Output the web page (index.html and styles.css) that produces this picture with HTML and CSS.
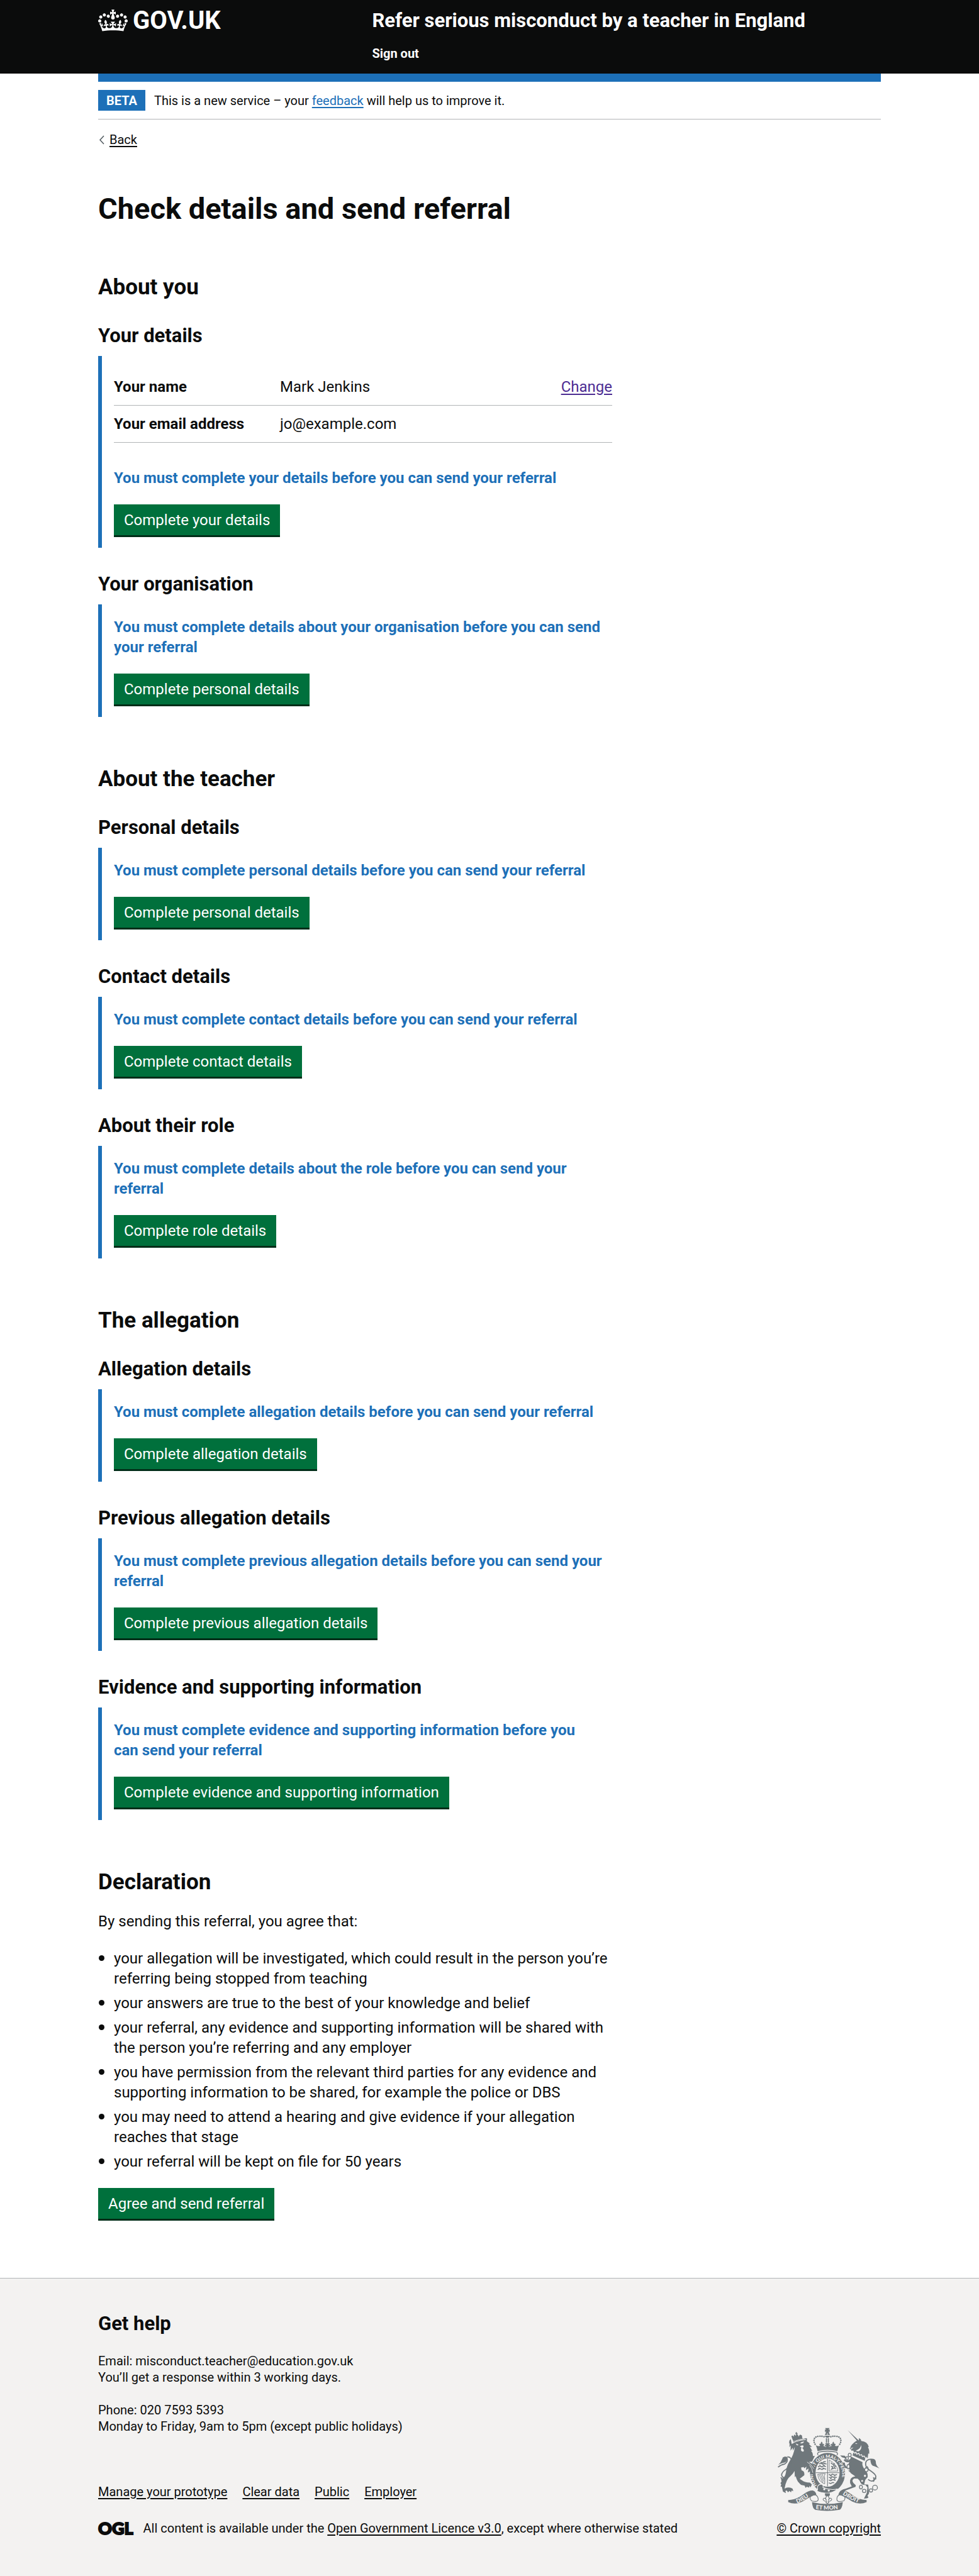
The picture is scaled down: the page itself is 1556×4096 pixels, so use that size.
FILE: index.html
```html
<!DOCTYPE html>
<html lang="en">
<head>
  <meta charset="utf-8">
  <meta name="viewport" content="width=device-width, initial-scale=1">
  <title>Check details and send referral</title>
  <link rel="stylesheet" href="styles.css">
</head>
<body>
  <header class="header">
    <div class="container header-inner">
      <a class="logo" href="#">
        <svg class="logo-crown" viewBox="0 0 132 97" aria-hidden="true"><path fill="currentColor" d="M25 30.2c3.5 1.5 7.7-.2 9.1-3.7 1.5-3.6-.2-7.8-3.9-9.2-3.6-1.4-7.6.3-9.1 3.9-1.4 3.5.3 7.5 3.9 9zM9 39.5c3.6 1.5 7.8-.2 9.2-3.7 1.5-3.6-.2-7.8-3.9-9.1-3.6-1.5-7.6.2-9.1 3.8-1.4 3.5.3 7.5 3.8 9zM4.4 57.2c3.5 1.5 7.7-.2 9.1-3.8 1.5-3.6-.2-7.7-3.9-9.1-3.5-1.5-7.6.3-9.1 3.8-1.4 3.5.3 7.6 3.9 9.1zm38.3-21.4c3.5 1.5 7.7-.2 9.1-3.8 1.5-3.6-.2-7.7-3.9-9.1-3.6-1.5-7.6.3-9.1 3.8-1.3 3.6.4 7.7 3.9 9.1zm64.4-5.6c-3.6 1.5-7.8-.2-9.1-3.7-1.5-3.6.2-7.8 3.8-9.2 3.6-1.4 7.7.3 9.2 3.9 1.3 3.5-.4 7.5-3.9 9zm15.9 9.3c-3.6 1.5-7.7-.2-9.1-3.7-1.5-3.6.2-7.8 3.7-9.1 3.6-1.5 7.7.2 9.2 3.8 1.5 3.5-.3 7.5-3.8 9zm4.7 17.7c-3.6 1.5-7.8-.2-9.2-3.8-1.5-3.6.2-7.7 3.9-9.1 3.6-1.5 7.7.3 9.2 3.8 1.3 3.5-.4 7.6-3.9 9.1zM89.3 35.8c-3.6 1.5-7.8-.2-9.2-3.8-1.4-3.6.2-7.7 3.9-9.1 3.6-1.5 7.7.3 9.2 3.8 1.4 3.6-.3 7.7-3.9 9.1zM69.7 17.7l8.9 4.7V9.3l-8.9 2.8c-.2-.3-.5-.6-.9-.9L72.4 0H59.6l3.5 11.2c-.3.3-.6.5-.9.9l-8.8-2.8v13.1l8.8-4.7c.3.3.6.7.9.9l-5 15.4v.1c-.2.8-.4 1.6-.4 2.4 0 4.1 3.1 7.5 7 8.1h.2c.3 0 .7.1 1 .1.4 0 .7 0 1-.1h.2c4-.6 7.1-4.1 7.1-8.1 0-.8-.1-1.7-.4-2.4V34l-5.1-15.4c.4-.2.7-.6 1-.9zM66 92.8c16.9 0 32.8 1.1 47.1 3.2 4-16.9 8.9-26.7 14-33.5l-9.6-3.4c1 4.9 1.1 7.2 0 10.2-1.5-1.4-3-4.3-4.2-8.7L108.6 76c2.8-2 5-3.2 7.5-3.3-4.4 9.4-10 11.9-13.6 11.2-4.3-.8-6.3-4.6-5.6-7.9 1-4.7 5.7-5.9 8-.5 4.3-8.7-3-11.4-7.6-8.8 7.1-7.2 7.9-13.5 2.1-21.1-8 6.1-8.1 12.3-4.5 20.8-4.7-5.4-12.1-2.5-9.5 6.2 3.4-5.2 7.9-2 7.2 3.1-.6 4.3-6.4 7.8-13.5 7.2-10.3-.9-10.9-8-11.2-13.8 2.5-.5 7.1 1.8 11 7.3L80.2 60c-4.1 4.4-8 5.3-12.3 5.4 1.4-4.4 8-11.6 8-11.6H55.5s6.4 7.2 7.9 11.6c-4.2-.1-8-1-12.3-5.4l1.4 16.4c3.9-5.5 8.5-7.7 10.9-7.3-.3 5.8-.9 12.8-11.1 13.8-7.2.6-12.9-2.9-13.5-7.2-.7-5 3.8-8.3 7.1-3.1 2.7-8.7-4.6-11.6-9.4-6.2 3.7-8.5 3.6-14.7-4.6-20.8-5.8 7.6-5 13.9 2.2 21.1-4.7-2.6-11.9.1-7.7 8.8 2.3-5.5 7.1-4.2 8.1.5.7 3.3-1.3 7.1-5.7 7.9-3.5.7-9-1.8-13.5-11.2 2.5.1 4.7 1.3 7.5 3.3l-4.7-15.4c-1.2 4.4-2.7 7.2-4.3 8.7-1.1-3-.9-5.3 0-10.2l-9.5 3.4c5 6.9 9.9 16.7 14 33.5 14.8-2.1 30.8-3.2 47.7-3.2z"/></svg>
        <span class="logo-text">GOV.UK</span>
      </a>
      <div class="header-content">
        <a class="service-name" href="#">Refer serious misconduct by a teacher in England</a>
        <nav><a class="sign-out" href="#">Sign out</a></nav>
      </div>
    </div>
  </header>

  <div class="container">
    <div class="phase-banner">
      <strong class="tag">BETA</strong>
      <span>This is a new service – your <a class="link" href="#">feedback</a> will help us to improve it.</span>
    </div>
    <a class="back-link" href="#"><svg class="back-arrow" viewBox="0 0 9 15" aria-hidden="true"><path d="M8 1 2 7.500 8 14" fill="none" stroke="#505a5f" stroke-width="1.500"/></svg><span>Back</span></a>

    <main class="main">
      <h1 class="heading-xl">Check details and send referral</h1>

      <section class="group">
        <h2 class="heading-l">About you</h2>
        <h3 class="heading-m">Your details</h3>
        <div class="inset">
          <dl class="summary">
            <div class="summary-row">
              <dt class="summary-key">Your name</dt>
              <dd class="summary-value">Mark Jenkins</dd>
              <dd class="summary-action"><a class="link-visited" href="#">Change</a></dd>
            </div>
            <div class="summary-row">
              <dt class="summary-key">Your email address</dt>
              <dd class="summary-value">jo@example.com</dd>
            </div>
          </dl>
          <p class="inset-message">You must complete your details before you can send your referral</p>
          <button class="button" type="button">Complete your details</button>
        </div>
        <h3 class="heading-m">Your organisation</h3>
        <div class="inset">
          <p class="inset-message">You must complete details about your organisation before you can send your referral</p>
          <button class="button" type="button">Complete personal details</button>
        </div>
      </section>

      <section class="group">
        <h2 class="heading-l">About the teacher</h2>
        <h3 class="heading-m">Personal details</h3>
        <div class="inset">
          <p class="inset-message">You must complete personal details before you can send your referral</p>
          <button class="button" type="button">Complete personal details</button>
        </div>
        <h3 class="heading-m">Contact details</h3>
        <div class="inset">
          <p class="inset-message">You must complete contact details before you can send your referral</p>
          <button class="button" type="button">Complete contact details</button>
        </div>
        <h3 class="heading-m">About their role</h3>
        <div class="inset">
          <p class="inset-message">You must complete details about the role before you can send your referral</p>
          <button class="button" type="button">Complete role details</button>
        </div>
      </section>

      <section class="group">
        <h2 class="heading-l">The allegation</h2>
        <h3 class="heading-m">Allegation details</h3>
        <div class="inset">
          <p class="inset-message">You must complete allegation details before you can send your referral</p>
          <button class="button" type="button">Complete allegation details</button>
        </div>
        <h3 class="heading-m">Previous allegation details</h3>
        <div class="inset">
          <p class="inset-message">You must complete previous allegation details before you can send your referral</p>
          <button class="button" type="button">Complete previous allegation details</button>
        </div>
        <h3 class="heading-m">Evidence and supporting information</h3>
        <div class="inset">
          <p class="inset-message">You must complete evidence and supporting information before you can&nbsp;send your referral</p>
          <button class="button" type="button">Complete evidence and supporting information</button>
        </div>
      </section>

      <section class="group">
        <h2 class="heading-l">Declaration</h2>
        <p class="declaration-intro">By sending this referral, you agree that:</p>
        <ul class="bullets">
          <li>your allegation will be investigated, which could result in the person you’re referring being stopped from teaching</li>
          <li>your answers are true to the best of your knowledge and belief</li>
          <li>your referral, any evidence and supporting information will be shared with the person you’re referring and any employer</li>
          <li>you have permission from the relevant third parties for any evidence and supporting information to be shared, for example the police or DBS</li>
          <li>you may need to attend a hearing and give evidence if your allegation reaches that stage</li>
          <li>your referral will be kept on file for 50 years</li>
        </ul>
        <button class="button" type="submit">Agree and send referral</button>
      </section>
    </main>
  </div>

  <footer class="footer">
    <div class="container">
      <h2 class="footer-heading">Get help</h2>
      <div class="footer-meta">
        <div class="footer-main">
          <p class="footer-text">Email: misconduct.teacher@education.gov.uk<br>You’ll get a response within 3 working days.</p>
          <p class="footer-text">Phone: 020 7593 5393<br>Monday to Friday, 9am to 5pm (except public holidays)</p>
          <ul class="footer-links">
            <li><a href="#">Manage your prototype</a></li>
            <li><a href="#">Clear data</a></li>
            <li><a href="#">Public</a></li>
            <li><a href="#">Employer</a></li>
          </ul>
          <div class="licence">
            <span class="ogl">OGL</span>
            <span>All content is available under the <a href="#">Open Government Licence v3.0</a>, except where otherwise stated</span>
          </div>
        </div>
        <a class="copyright" href="#">
          <svg class="crest" viewBox="130 93 754 617" aria-hidden="true">
            <defs>
              <path id="garter" d="M428 530A108 122 0 1 1 572 530"/>
              <path id="scroll-left" d="M274 652Q322 634 372 594"/>
              <path id="scroll-mid" d="M412 694Q498 706 586 693"/>
              <path id="scroll-right" d="M610 588Q664 622 724 648"/>
            </defs>
            <!-- royal crown -->
            <g fill="#6f777b">
              <path d="M481 96h33l-8 13 9-4v20l-9-4 7 12h-30l7-12-10 4v-20l9 4zM479 147q2-14 17-15v15zM500 132q15 1 17 15h-17zM479 152h38q-3 14-19 15-16-1-19-15z"/>
              <path d="M487 170h8v36h-8zM501 170h8v36h-8zM481 208h36l-10 14 12-4v14l-12-3 8 12h-32l8-12-11 3v-14l11 4z"/>
              <path d="M412 222q26 14 32 2-12-8 0-13 7 0 7 8-6-14 4-24 12 12 5 24 3-10 10-6 8 8-3 14 14 10 31 10t32-10q-12-6-4-14 7-4 10 6-6-12 5-24 11 10 4 24 1-8 8-8 11 7 0 13 8 12 31-2-10 24-12 45-74-20-147 0-3-23-13-45z"/>
              <g fill="none" stroke="#6f777b" stroke-width="12" stroke-linecap="round" stroke-dasharray="0 15"><path d="M407 215C390 188 398 158 432 157Q460 153 480 163M589 215C606 188 598 158 564 157Q536 153 516 163"/></g>
              <path fill="none" stroke="#6f777b" stroke-width="6" d="M430 274q68-15 138 0M434 274q-16 10-4 22M564 274q16 10 4 22"/>
            </g>
            <!-- garter and shield -->
            <ellipse cx="499" cy="427" rx="130" ry="148" fill="#6f777b"/>
            <ellipse cx="499" cy="425" rx="89" ry="105" fill="#f3f2f1"/>
            <text class="crest-text crest-garter"><textPath href="#garter" startOffset="12">HONI  SOIT QUI MAL·Y·PENSE</textPath></text>
            <g fill="none" stroke="#6f777b" stroke-width="5">
              <path d="M499 322v205M411 426h176"/>
              <path stroke-width="4" d="M511 332v82h65q-5-49-65-82z"/>
              <path stroke-width="7" d="M448 347l12 7 10-8 16-3M436 361l15-5 12 8 12-7 16 5M428 382l16-7 10 8 14-7 19 5M426 403l16-8 16 7 14-7 16 5M441 370l7 9M470 366l6 9M434 390l9 9M463 388l6 8M524 352l13 12 12-4-5 14 14 3-8 13 10 8M525 378l14 5-10 17 20-9"/>
              <path stroke-width="4" d="M426 438q30-6 56-5-12 14-4 35v40q-44-12-52-70zM436 440l28 60M447 438l23 53M459 437l15 39"/>
              <path stroke-width="7" d="M508 439l16 6 11-8 18 7 16-5M509 459l14 6 14-9 14 8 17-5M508 480l15 5 15-9 20 7M508 501l14 5 16-8 10 3M521 446l7 9M550 447l5 8M521 466l6 9M549 466l6 9"/>
            </g>
            <path fill="#6f777b" stroke="#f3f2f1" stroke-width="5" d="M424 532q8-24 34-20 14 12 6 22 54 25 110 12-48 42-115 28-30-6-39-14 9-10 4-28z"/>
            <circle cx="475" cy="548" r="8" fill="#f3f2f1"/><circle cx="508" cy="558" r="8" fill="#f3f2f1"/>
            <!-- lion -->
            <g fill="#6f777b">
              <path d="M234 214l14-8-4-9 96-27 7 3-1 20 24 18-10 1 24 24-16-2 18 30-10-1q16 16 15 40l14-2-20 42-24 4 26 14q25 22 20 76l-16 10-4-20-12 16-6-26-16 8 6-30-20 12 4-26-16 12-6-10q-8 4-18 4l4 22q24 6 20 36l-34 26 18 12q18 16 58 16l14 14-10 22-8-12-2 14-18-8-8 10-8-18-24-4q-26-18-34-42l-8-24-6 8-2-46q-10 20-32 40-30 20-42 90l16-6q26-6 44 8l4 18-12-6-4 14-12-10-10 10-10-14-10 4 4 16-22-12-8-34-10-4 6-14-6-10 8-12-4-18 12-4q18-12 24-44 4-48 26-82 34-52 40-108l-14 28-2-22-16 22 2-40-10 14 2-34-6 10 4-24 10-12z"/>
              <path d="M243 187l-9-24q-5-13 8-12l8 10q-3-15 7-18l7 11q3-22 15-8l7 12q6-15 15-13 14 5 9 17l5 13q-42 5-67 18z"/>
              <path d="M259 131l8 1-3-7 9 2-1 7 8 1-6 6-8 2z"/>
              <path fill="none" stroke="#6f777b" stroke-width="8" d="M133 385q20-18 50-24 26-16 15-45-16-9-30 2M202 308q36 2 30 42-6 28-42 52-28 18-31 40 2 20 28 26 20-4 32-22M153 460q10 18 28 12"/>
              <path d="M202 309q-30-8-38 14-8 25-30 46 30-17 46-17 22-8 22-43z"/>
              <path fill="#f3f2f1" d="M263 211q10 0 20 8 2 6-10 4zM296 206q14-10 30-10-6 14-22 14zM293 232q18-12 28-6v12l-10 4q16 12 12 24-10 10-20-4-2-14 4-22z"/>
              <path fill="none" stroke="#f3f2f1" stroke-width="5" d="M240 206q50-22 98-26"/>
              <path fill="none" stroke="#f3f2f1" stroke-width="4" d="M348 347q30 16 50 50M366 370q22 24 24 56"/>
            </g>
            <!-- unicorn -->
            <g fill="#6f777b">
              <path d="M648 111l82 76 2-18q14 8 16 22 46 4 56 44l-6 2q12 18 9 50l-7-4-4 38-8-14-6 12-94-48 2-12q-8 6-16 4l2-8-12-6 8-20q20-28 44-40z"/>
              <path d="M672 306l86 42q-6 24 12 48 30 30 26 62l-18 22-8 32 30 2 6 64-12 20 8 8q-4 10-14 10l-20 2 22-44 4-40-16-18q-30 6-42-32l-14-14-26-1q-22 12-6 32l18 18-2 12-74 26-8 14q-12 12-30 10l8-14-14 2q12-18 44-24l46-18-12-24q-8-42 38-50l-32-22-30-42 18-42q-26 8-42-14l14-12 18 14 18-12zM644 320l-18-20-34-2 14 14 18 4 14 20zM608 350l18 40 20 6 16 28-2-24-12-14q-18-4-22-34z"/>
              <path fill="#f3f2f1" d="M748 220q-4 30-40 42 10 6 22 6 24-16 18-48zM702 208q10-4 18 4-10 4-18-4zM668 242q12 4 22-4-6 12-16 12z"/>
              <path fill="#6f777b" stroke="#f3f2f1" stroke-width="6" d="M689 270l12 12 8-8 6 15 15-7 6 15 15-5 5 14 14-3 11 17-5 22-96-42z"/>
              <g fill="none" stroke="#6f777b" stroke-width="8">
                <path d="M786 408q-14-18 6-26 8 10 8 18 40 26 50 40 12 14 1 32-20 30-52 3M786 386q-20-58 36-60"/>
                <path d="M838 460q10 18 0 32M848 462l10 12"/>
              </g>
              <path d="M816 323q36-4 40 20-2 28 28 52-34-16-50-20-18-12-18-52z"/>
              <g fill="#f3f2f1" stroke="#6f777b" stroke-width="6">
                <ellipse cx="663" cy="295" rx="11" ry="13"/><ellipse cx="644" cy="319" rx="9" ry="12"/><ellipse cx="653" cy="380" rx="10" ry="15"/><circle cx="786" cy="405" r="13"/><circle cx="776" cy="449" r="11"/><circle cx="755" cy="486" r="10"/><ellipse cx="746" cy="532" rx="11" ry="14"/><ellipse cx="770" cy="561" rx="13" ry="12"/><ellipse cx="820" cy="557" rx="12" ry="12"/><circle cx="850" cy="536" r="18"/>
              </g>
            </g>
            <!-- scroll and fleur -->
            <g fill="#6f777b">
              <path d="M208 628q60 0 115-44 36-28 66-27 26 6 28 38-18-4-32 4-28 12-70 40-54 28-107 5z"/>
              <path d="M788 628q-60 0-115-44-36-28-66-27-26 6-28 38 18-4 32 4 28 12 70 40 54 28 107 5z"/>
              <path d="M384 644q110 28 228 0-6 54-26 57-90 15-178 0-20-6-24-57z"/>
              <path fill="none" stroke="#6f777b" stroke-width="5" d="M380 594q-20 18 0 40 50 12 50-10-2-26-16-30M616 594q22 18 4 40-52 14-52-10 0-26 14-30"/>
              <path d="M480 578h36v16l-8 6h-20l-8-6z"/>
              <path fill="#f3f2f1" stroke="#6f777b" stroke-width="5" d="M498 594q22 20 7 37 5-18 19-16 14 8-4 20l-16 3 5 8-11 9-11-9 5-8-16-3q-18-12-4-20 14-2 19 16-15-17 7-37z"/>
            </g>
            <text class="crest-text"><textPath href="#scroll-left">DIEU</textPath></text>
            <text class="crest-text"><textPath href="#scroll-mid">ET MON</textPath></text>
            <text class="crest-text"><textPath href="#scroll-right">DROIT</textPath></text>
          </svg>
          <span class="copyright-text">© Crown copyright</span>
        </a>
      </div>
    </div>
  </footer>
</body>
</html>
```
FILE: styles.css
```css
* {
  box-sizing: border-box;
}

body {
  margin: 0;
  background: #fff;
  color: #0b0c0c;
  font-family: Roboto, "Liberation Sans", sans-serif;
  font-size: 24px;
  line-height: 32px;
}

h1, h2, h3, p, ul, dl, dd {
  margin: 0;
}

a {
  color: inherit;
  text-underline-offset: 3px;
}

.container {
  max-width: 1244px;
  margin: 0 auto;
}

/* Header */

.header {
  background: #0b0c0c;
  color: #fff;
}

.header-inner {
  display: flex;
  padding: 13px 0 19px;
}

.header a {
  text-decoration: none;
}

.logo {
  display: flex;
  flex: 0 0 35%;
  gap: 8px;
  align-items: center;
  align-self: flex-start;
}

.logo-crown {
  width: 47px;
  height: 35px;
}

.logo-text {
  font-size: 40px;
  font-weight: 700;
  line-height: 39px;
}

.header-content {
  display: flex;
  flex-direction: column;
  gap: 20px;
}

.service-name {
  font-size: 31px;
  font-weight: 700;
  line-height: 39px;
}

.sign-out {
  display: block;
  font-size: 20px;
  font-weight: 700;
  line-height: 26px;
}

/* Phase banner */

.phase-banner {
  display: flex;
  gap: 14px;
  align-items: center;
  padding: 13px 0;
  border-top: 13px solid #1d70b8;
  border-bottom: 1px solid #b1b4b6;
  font-size: 20px;
  line-height: 26px;
}

.tag {
  padding: 4px 13px 3px;
  background: #1d70b8;
  color: #fff;
}

.link {
  color: #1d70b8;
}

.link-visited {
  color: #4c2c92;
}

.back-link {
  display: inline-flex;
  gap: 8px;
  align-items: center;
  margin-top: 19px;
  font-size: 20px;
  line-height: 26px;
}

.back-arrow {
  width: 9px;
  height: 15px;
  margin-left: 1px;
}

/* Main content */

.main {
  max-width: 817px;
  padding: 68px 0 91px;
}

.heading-xl {
  font-size: 47px;
  line-height: 52px;
}

.group {
  margin-top: 76px;
}

.heading-l {
  font-size: 35px;
  line-height: 45px;
}

.heading-m {
  margin: 38px 0 13px;
  font-size: 31px;
  line-height: 39px;
}

.heading-l + .heading-m {
  margin-top: 35px;
}

.inset {
  padding: 20px 0 17px 19px;
  border-left: 6px solid #1d70b8;
}

.inset-message {
  margin-bottom: 26px;
  color: #1d70b8;
  font-weight: 700;
}

.summary {
  margin-bottom: 40px;
}

.summary-row {
  display: flex;
  padding: 13px 0;
  border-bottom: 1px solid #b1b4b6;
}

.summary-key {
  flex: 0 0 33.333%;
  font-weight: 700;
}

.summary-value {
  flex: 1;
}

.button {
  display: block;
  padding: 9px 16px 8px;
  border: 0;
  border-bottom: 3px solid #002d18;
  border-radius: 0;
  background: #00703c;
  color: #fff;
  font: inherit;
}

.declaration-intro {
  margin: 24px 0 26px;
}

.bullets {
  margin-bottom: 26px;
  padding-left: 25px;
}

.bullets li + li {
  margin-top: 6px;
}

.bullets li::marker {
  font-size: 28px;
}

/* Footer */

.footer {
  padding: 52px 0 64px;
  border-top: 1px solid #b1b4b6;
  background: #f3f2f1;
  font-size: 20px;
  line-height: 26px;
}

.footer-heading {
  margin-bottom: 27px;
  font-size: 31px;
  line-height: 39px;
}

.footer-meta {
  display: flex;
  align-items: flex-end;
  justify-content: space-between;
}

.footer-text {
  margin-bottom: 26px;
}

.footer-links {
  display: flex;
  gap: 24px;
  margin: 78px 0 32px;
  padding: 0;
  list-style: none;
}

.licence {
  display: flex;
  gap: 16px;
}

.ogl {
  font-family: Lato, sans-serif;
  font-size: 27px;
  font-weight: 900;
  -webkit-text-stroke: 2px #0b0c0c;
}

.copyright {
  display: flex;
  flex-direction: column;
  align-items: center;
  gap: 14px;
  text-decoration: none;
}

.crest {
  width: 162px;
  height: 133px;
}

.crest-text {
  fill: #f3f2f1;
  font-family: Lato, sans-serif;
  font-size: 42px;
  font-weight: 900;
}

.crest-garter {
  font-size: 34px;
}

.copyright-text {
  text-decoration: underline;
}
```
